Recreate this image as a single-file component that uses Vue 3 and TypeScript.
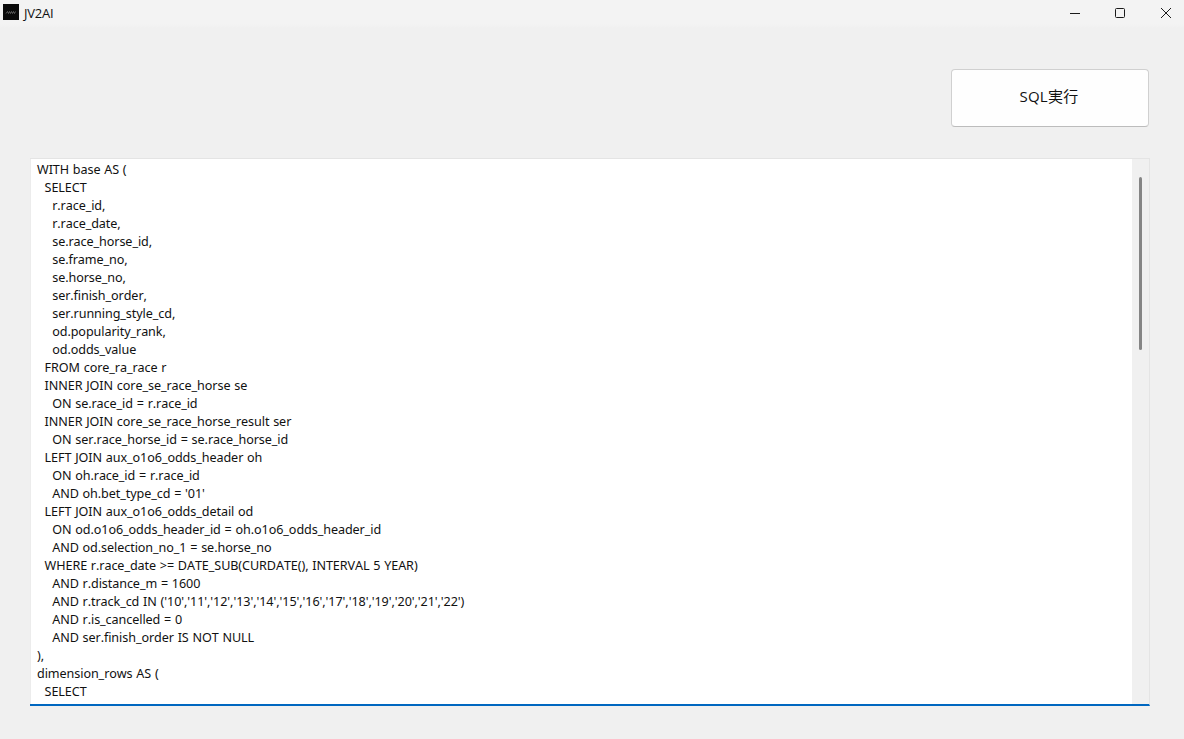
<script setup lang="ts">
const sql: string = `WITH base AS (
  SELECT
    r.race_id,
    r.race_date,
    se.race_horse_id,
    se.frame_no,
    se.horse_no,
    ser.finish_order,
    ser.running_style_cd,
    od.popularity_rank,
    od.odds_value
  FROM core_ra_race r
  INNER JOIN core_se_race_horse se
    ON se.race_id = r.race_id
  INNER JOIN core_se_race_horse_result ser
    ON ser.race_horse_id = se.race_horse_id
  LEFT JOIN aux_o1o6_odds_header oh
    ON oh.race_id = r.race_id
    AND oh.bet_type_cd = '01'
  LEFT JOIN aux_o1o6_odds_detail od
    ON od.o1o6_odds_header_id = oh.o1o6_odds_header_id
    AND od.selection_no_1 = se.horse_no
  WHERE r.race_date >= DATE_SUB(CURDATE(), INTERVAL 5 YEAR)
    AND r.distance_m = 1600
    AND r.track_cd IN ('10','11','12','13','14','15','16','17','18','19','20','21','22')
    AND r.is_cancelled = 0
    AND ser.finish_order IS NOT NULL
),
dimension_rows AS (
  SELECT`
</script>

<template>
  <div class="window">
    <header class="titlebar">
      <div class="title-left">
        <svg class="app-icon" width="16" height="16" viewBox="0 0 16 16">
          <rect width="16" height="16" fill="#0a0a0a" />
          <path d="M3 9.5l1.5-2 1 2 1-2 1 2 1-2 1 2 1-2 1 2 1-2" stroke="#8a8a8a" stroke-width="0.6" fill="none" />
        </svg>
        <span class="app-title">JV2AI</span>
      </div>
      <div class="controls">
        <button class="ctl" aria-label="minimize">
          <svg width="12" height="12" viewBox="0 0 12 12"><path d="M1 6.5h10" stroke="#1a1a1a" fill="none" /></svg>
        </button>
        <button class="ctl" aria-label="maximize">
          <svg width="12" height="12" viewBox="0 0 12 12"><rect x="1.5" y="1.5" width="9" height="9" rx="1" stroke="#1a1a1a" fill="none" /></svg>
        </button>
        <button class="ctl ctl-close" aria-label="close">
          <svg width="12" height="12" viewBox="0 0 12 12"><path d="M1 1l10 10M11 1L1 11" stroke="#1a1a1a" fill="none" /></svg>
        </button>
      </div>
    </header>
    <main class="content">
      <div class="toolbar">
        <button class="run">SQL実行</button>
      </div>
      <section class="editor">
        <pre class="code">{{ sql }}</pre>
        <div class="scrollbar"><div class="thumb"></div></div>
      </section>
    </main>
  </div>
</template>

<style>
html, body { margin: 0; background: #f0f0f0; overflow: hidden; }
</style>

<style scoped>
.window {
  width: 1184px;
  height: 739px;
  background: #f0f0f0;
  display: flex;
  flex-direction: column;
  font-family: "Open Sans", "Noto Sans CJK JP", sans-serif;
  color: #111;
  overflow: hidden;
}
.titlebar {
  height: 28px;
  flex: none;
  background: linear-gradient(#f3f3f3 0, #f3f3f3 24px, #f0f0f0 28px);
  display: flex;
  justify-content: space-between;
}
.title-left {
  display: flex;
  align-items: center;
  padding-left: 3px;
  gap: 5px;
  height: 24px;
}
.app-title {
  font-size: 13px;
  letter-spacing: -0.2px;
  padding-top: 1px;
}
.controls {
  display: flex;
  margin-right: -3px;
}
.ctl {
  width: 45px;
  height: 25px;
  padding: 0;
  border: 0;
  background: transparent;
  display: flex;
  align-items: center;
  justify-content: center;
}
.ctl-close svg {
  margin-left: 2px;
}
.content {
  flex: 1;
  display: flex;
  flex-direction: column;
  padding: 41px 34px 33px 30px;
  min-height: 0;
}
.toolbar {
  display: flex;
  justify-content: flex-end;
  height: 58px;
  flex: none;
  margin-bottom: 31px;
  padding-right: 1px;
}
.run {
  width: 198px;
  height: 58px;
  box-sizing: border-box;
  background: #fefefe;
  border: 1px solid #d0d0d0;
  border-bottom-color: #bcbcbc;
  border-radius: 4px;
  font-family: inherit;
  font-size: 15px;
  letter-spacing: 0.3px;
  color: #111;
  padding: 0 2px 6px 0;
}
.editor {
  flex: 1;
  min-height: 0;
  display: flex;
  background: #fff;
  box-sizing: border-box;
  border-top: 1px solid #e4e4e4;
  border-right: 1px solid #e4e4e4;
  border-bottom: 2px solid #0067c0;
  box-shadow: inset 1px 0 0 #ececec;
  overflow: hidden;
}
.code {
  flex: 1;
  margin: 0;
  padding: 2px 0 0 7px;
  font-family: "Noto Sans", "Open Sans", sans-serif;
  font-size: 12.6px;
  font-kerning: none;
  line-height: 18px;
  letter-spacing: -0.08px;
  word-spacing: 0.6px;
  white-space: pre;
  overflow: hidden;
}
.scrollbar {
  width: 17px;
  flex: none;
  background: #f0f0f0;
  padding: 18px 0 0 7px;
  box-sizing: border-box;
}
.thumb {
  width: 3px;
  height: 173px;
  background: #858585;
  border-radius: 1.5px;
}
</style>
